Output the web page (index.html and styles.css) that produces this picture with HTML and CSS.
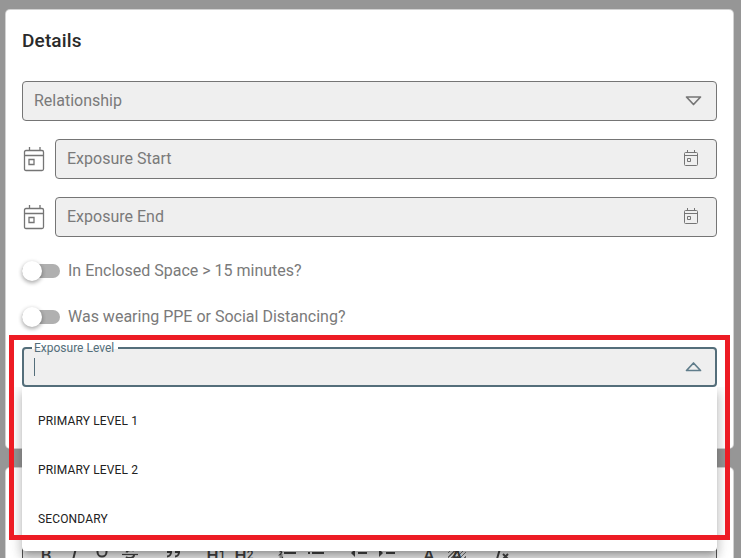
FILE: index.html
```html
<!DOCTYPE html>
<html lang="en">
<head>
<meta charset="utf-8">
<title>Details</title>
<link rel="stylesheet" href="styles.css">
</head>
<body>
<svg width="0" height="0" class="defs">
  <symbol id="cal" viewBox="0 0 24 26"><path d="M4 4.500h16q1.500 0 1.500 1.500v17q0 1.500-1.500 1.500h-16q-1.500 0-1.500-1.500v-17q0-1.500 1.500-1.500zM2.500 9.500h19M7.500 1v3.500M18 1v3.500M7 13.500h5v5H7z"/></symbol>
  <symbol id="cal-small" viewBox="0 0 16 18"><path d="M2.500 3.500h11q1 0 1 1v11q0 1-1 1h-11q-1 0-1-1v-11q0-1 1-1zM1.500 6.500h13M4.500 1v2.500M11.500 1v2.500M4.500 9.500h3v3h-3z"/></symbol>
</svg>
<section class="card details">
  <h2>Details</h2>
  <div class="field"><span>Relationship</span>
    <svg class="arrow" width="17" height="12" viewBox="0 0 17 12"><path d="M1.500 2h14L8.500 9.500z"/></svg></div>
  <div class="date-row"><svg class="cal" width="24" height="26"><use href="#cal"/></svg>
    <div class="field"><span>Exposure Start</span><svg class="cal-small" width="16" height="18"><use href="#cal-small"/></svg></div></div>
  <div class="date-row"><svg class="cal" width="24" height="26"><use href="#cal"/></svg>
    <div class="field"><span>Exposure End</span><svg class="cal-small" width="16" height="18"><use href="#cal-small"/></svg></div></div>
  <div class="switch-row"><i class="switch"></i><span>In Enclosed Space &gt; 15 minutes?</span></div>
  <div class="switch-row"><i class="switch"></i><span>Was wearing PPE or Social Distancing?</span></div>
  <div class="field active">
    <label>Exposure Level</label><i class="caret"></i>
    <svg class="arrow" width="17" height="12" viewBox="0 0 17 12"><path d="M1.500 9.500h14L8.500 2z"/></svg>
    <ul class="menu"><li>PRIMARY LEVEL 1</li><li>PRIMARY LEVEL 2</li><li>SECONDARY</li></ul>
  </div>
</section>
<section class="card notes">
  <div class="toolbar">
    <div class="group">
      <b class="tool">B</b>
      <svg class="tool" viewBox="0 0 18 18"><path d="M7 4h6M5 16h6M8 16l3-12"/></svg>
      <svg class="tool" viewBox="0 0 18 18"><path d="M4.500 3v5a4.500 4.500 0 0 0 9 0V3"/></svg>
      <svg class="tool" viewBox="0 0 18 18"><path class="thin" d="M1 10.500h16"/><path d="M13 6.500C10 5.500 6 6 5.500 8.500M13 11c0 3-5 4-8 2"/></svg>
    </div>
    <div class="group"><svg class="tool" viewBox="0 0 18 18"><path class="solid" d="M3 5h5v4H3zM11 5h5v4h-5z"/><path d="M7 7v1c0 3-2 4.500-4 4.500M15 7v1c0 3-2 4.500-4 4.500"/></svg></div>
    <div class="group"><b class="tool">H<small>1</small></b><b class="tool">H<small>2</small></b></div>
    <div class="group">
      <svg class="tool" viewBox="0 0 18 18"><path d="M6 4h12M6 9h12M6 16h12"/><path class="thin" d="M1.500 8q3-1 2 1l-2 2h3M1.500 13h3v3h-3"/></svg>
      <svg class="tool" viewBox="0 0 18 18"><path d="M6 4h12M6 9h12M6 16h12M2 4h2M2 9h2M2 16h2"/></svg>
    </div>
    <div class="group">
      <svg class="tool" viewBox="0 0 18 18"><path d="M3 4h15M9 9h9M3 16h15"/><path class="solid" d="M6 5v8L2 9z"/></svg>
      <svg class="tool" viewBox="0 0 18 18"><path d="M3 4h15M9 9h9M3 16h15"/><path class="solid" d="M2 5v8l4-4z"/></svg>
    </div>
    <div class="group"><b class="tool">A</b>
      <b class="tool hatch">A</b></div>
    <div class="group"><svg class="tool" viewBox="0 0 18 18"><path d="M5 3h8M6 15L9.500 3M12 10l5 5M17 10l-5 5"/></svg></div>
  </div>
</section>
<div class="highlight"></div>
</body>
</html>
```
FILE: styles.css
```css
* { box-sizing: border-box; }
html { height: 558px; overflow: hidden; }
body {
  margin: 0; padding: 10px 8px 0 6px; height: 558px; overflow: hidden;
  position: relative; background: #969696;
  font: 16px/24px Roboto, sans-serif; color: #7a7a7a;
}
.defs { position: absolute; }
svg { fill: none; stroke: #757575; flex: none; }
.card { background: #fff; border-radius: 4px; box-shadow: 0 0 0 1px #d2d2d2; padding: 0 16px; }
.details { height: 438px; padding-top: 15px; }
h2 { margin: 0 0 24px; font-size: 19px; line-height: 32px; font-weight: 500; letter-spacing: .15px; color: #2a2a2a; }
.field {
  height: 40px; flex: 1; border: 1px solid #757575; border-radius: 4px; background: #efefef;
  display: flex; align-items: center; justify-content: space-between; padding: 0 14px 0 11px;
}
.field span { line-height: 22px; margin-bottom: 1px; }
.field .arrow { stroke-width: 1.7; stroke-linejoin: round; }
.date-row { display: flex; gap: 9px; margin-top: 18px; }
.date-row .cal { margin-top: 7px; stroke-width: 1.3; }
.date-row .field { padding-right: 17px; }
.cal-small { margin-bottom: 2px; }
.switch-row { display: flex; align-items: center; height: 24px; margin-top: 22px; gap: 8px; }
.switch { width: 38px; height: 14px; border-radius: 7px; background: #b0b0b0; display: flex; align-items: center; margin-bottom: 1px; }
.switch::before { content: ""; width: 20px; height: 20px; border-radius: 50%; background: #fff; box-shadow: 0 2px 4px #0004, 0 1px 5px #0002; }
.active { position: relative; margin-top: 18px; border: 2px solid #546e7a; padding: 0 13px 0 10px; }
.active .arrow { stroke: #607d8b; }
.active label {
  position: absolute; left: 8px; top: -9px; padding: 0 4px 0 2px; line-height: 16px;
  font-size: 12px; color: #546e7a;
  background: linear-gradient(#fff 9px, #efefef 9px);
}
.caret { width: 1px; height: 18px; background: #546e7a; }
.menu {
  position: absolute; z-index: 1; left: -2px; top: 38px; width: 695px; height: 164px; margin: 0; padding: 10px 16px;
  list-style: none; background: #fff; color: #212121; font-size: 12px; letter-spacing: .15px;
  border-radius: 0 0 4px 4px;
  clip-path: inset(0 -15px -15px);
  box-shadow: 0 5px 5px -3px #0003, 0 8px 10px 1px #00000024, 0 3px 14px 2px #0000001f;
}
.menu li { height: 49px; line-height: 49px; }
.notes { height: 120px; margin-top: 20px; padding-top: 67px; }
.toolbar { display: flex; gap: 25px; height: 42px; border: 1px solid #555; border-radius: 4px 4px 0 0; background: #efefef; padding: 8px 0 0 14px; }
.group { display: flex; gap: 10px; }
.tool { width: 18px; height: 18px; flex: none; stroke: #444; stroke-width: 2; }
.tool .thin { stroke-width: 1.2; }
.tool .solid { fill: #444; stroke: none; }
b.tool { font: 500 17px/22px Roboto, sans-serif; color: #444; display: flex; justify-content: center; }
b small { font-size: 12px; line-height: 23px; }
.hatch { background: repeating-linear-gradient(135deg, #777 0 1px, #efefef 1px 3px); }
.highlight { position: absolute; z-index: 2; left: 9px; top: 335px; width: 721px; height: 205px; border: 5px solid #ed1c24; pointer-events: none; }
```
